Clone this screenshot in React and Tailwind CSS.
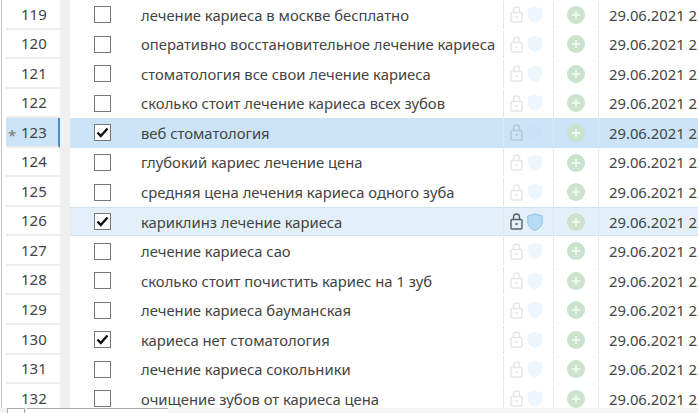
import React from "react";

const rows = [
  [119, "лечение кариеса в москве бесплатно"],
  [120, "оперативно восстановительное лечение кариеса"],
  [121, "стоматология все свои лечение кариеса"],
  [122, "сколько стоит лечение кариеса всех зубов"],
  [123, "веб стоматология", "active"],
  [124, "глубокий кариес лечение цена"],
  [125, "средняя цена лечения кариеса одного зуба"],
  [126, "кариклинз лечение кариеса", "selected"],
  [127, "лечение кариеса сао"],
  [128, "сколько стоит почистить кариес на 1 зуб"],
  [129, "лечение кариеса бауманская"],
  [130, "кариеса нет стоматология", "checked"],
  [131, "лечение кариеса сокольники"],
  [132, "очищение зубов от кариеса цена"],
];

function Lock({ tone }) {
  const c = tone === "dark" ? "#5a5f63" : tone === "active" ? "#b4c6d6" : "#e6e6e6";
  return (
    <svg width="13" height="17" viewBox="0 0 13 17" fill="none" stroke={c} strokeWidth="1.4">
      <rect x="1" y="6.5" width="11" height="9.5" rx="1" />
      <path d="M3.5 6.5V4a3 3 0 0 1 6 0v2.5" />
      <rect x="5.5" y="10" width="2" height="2" fill={c} stroke="none" />
    </svg>
  );
}

function Shield({ tone }) {
  const fill = tone === "dark" ? "#b9dcf5" : tone === "active" ? "#c9e2f7" : "#eef6fd";
  return (
    <svg width="16" height="18" viewBox="0 0 16 18">
      <path d="M8 .8 15.2 3v6c0 4-3.2 6.8-7.2 8.4C4 15.8.8 13 .8 9V3Z" fill={fill} stroke={tone === "dark" ? "#8fc1e6" : "none"} strokeWidth="1" />
    </svg>
  );
}

function Plus() {
  return (
    <svg width="18" height="18" viewBox="0 0 18 18">
      <circle cx="9" cy="9" r="9" fill="#c9e3cd" />
      <path d="M9 5v8M5 9h8" stroke="#eef7ef" strokeWidth="2" />
    </svg>
  );
}

function Check({ on }) {
  return (
    <div className="w-[17px] h-[17px] border-[1.5px] border-[#777] bg-white flex items-center justify-center box-border">
      {on && (
        <svg width="13" height="11" viewBox="0 0 13 11" fill="none">
          <path d="M1.5 5.5 4.8 9 11.5 1.5" stroke="#111" strokeWidth="2.4" />
        </svg>
      )}
    </div>
  );
}

export default function App() {
  return (
    <div className="w-[698px] h-[413px] overflow-hidden bg-white flex flex-col text-[14.8px] text-[#444] font-['Noto_Sans',sans-serif]">
      <div className="h-[408px] shrink-0 overflow-hidden flex flex-col ml-px border-l border-[#c4c4c4]">
        {rows.map(([n, text, state]) => {
          const active = state === "active";
          const selected = state === "selected";
          const checked = active || selected || state === "checked";
          const rowBg = active ? "bg-[#cce4f8]" : selected ? "bg-[#e3f0f9]" : "bg-white";
          const tone = selected ? "dark" : active ? "active" : "light";
          return (
            <div key={n} className="flex h-[29.55px] shrink-0">
              <div className={`w-[54px] shrink-0 ml-1 flex items-center border-b-2 border-[#eeeeee] relative ${active ? "bg-[#cce4f8] border-r-2 border-r-[#3e8fcb]" : "bg-white"}`}>
                {active && <span className="absolute left-[2px] top-[7px] text-[#777] text-[15px] leading-[20px]">*</span>}
                <span className="pl-[15px] text-[15px]">{n}</span>
              </div>
              <div className="w-[10px] shrink-0 bg-[#f0f0f0]" />
              <div className={`flex-1 flex items-center border-y ${rowBg} ${selected ? "border-[#cfe3f1]" : active ? "border-[#cce4f8]" : "border-transparent"}`}>
                <div className="w-[71px] shrink-0 pl-6 flex items-center">
                  <Check on={checked} />
                </div>
                <div className="w-[362px] shrink-0 whitespace-nowrap">{text}</div>
                <div className="w-[50px] shrink-0 h-full flex items-center gap-[4px] pl-[6px] border-l border-[#e6e6e6]">
                  <Lock tone={tone} />
                  <Shield tone={tone} />
                </div>
                <div className="w-[45px] shrink-0 h-full flex items-center pl-[13px] border-l border-[#e6e6e6]">
                  <Plus />
                </div>
                <div className="pl-[10px] h-full flex items-center border-l border-[#e6e6e6] whitespace-nowrap">29.06.2021 22:15</div>
              </div>
            </div>
          );
        })}
      </div>
      <div className="h-[5px] shrink-0 bg-[#f3f3f3] flex gap-[2px] pl-[7px]">
        <div className="w-[18px] bg-white border-t border-x border-[#a8a8a8]" />
        <div className="w-[141px] bg-white border-t border-[#a8a8a8]" />
      </div>
    </div>
  );
}
